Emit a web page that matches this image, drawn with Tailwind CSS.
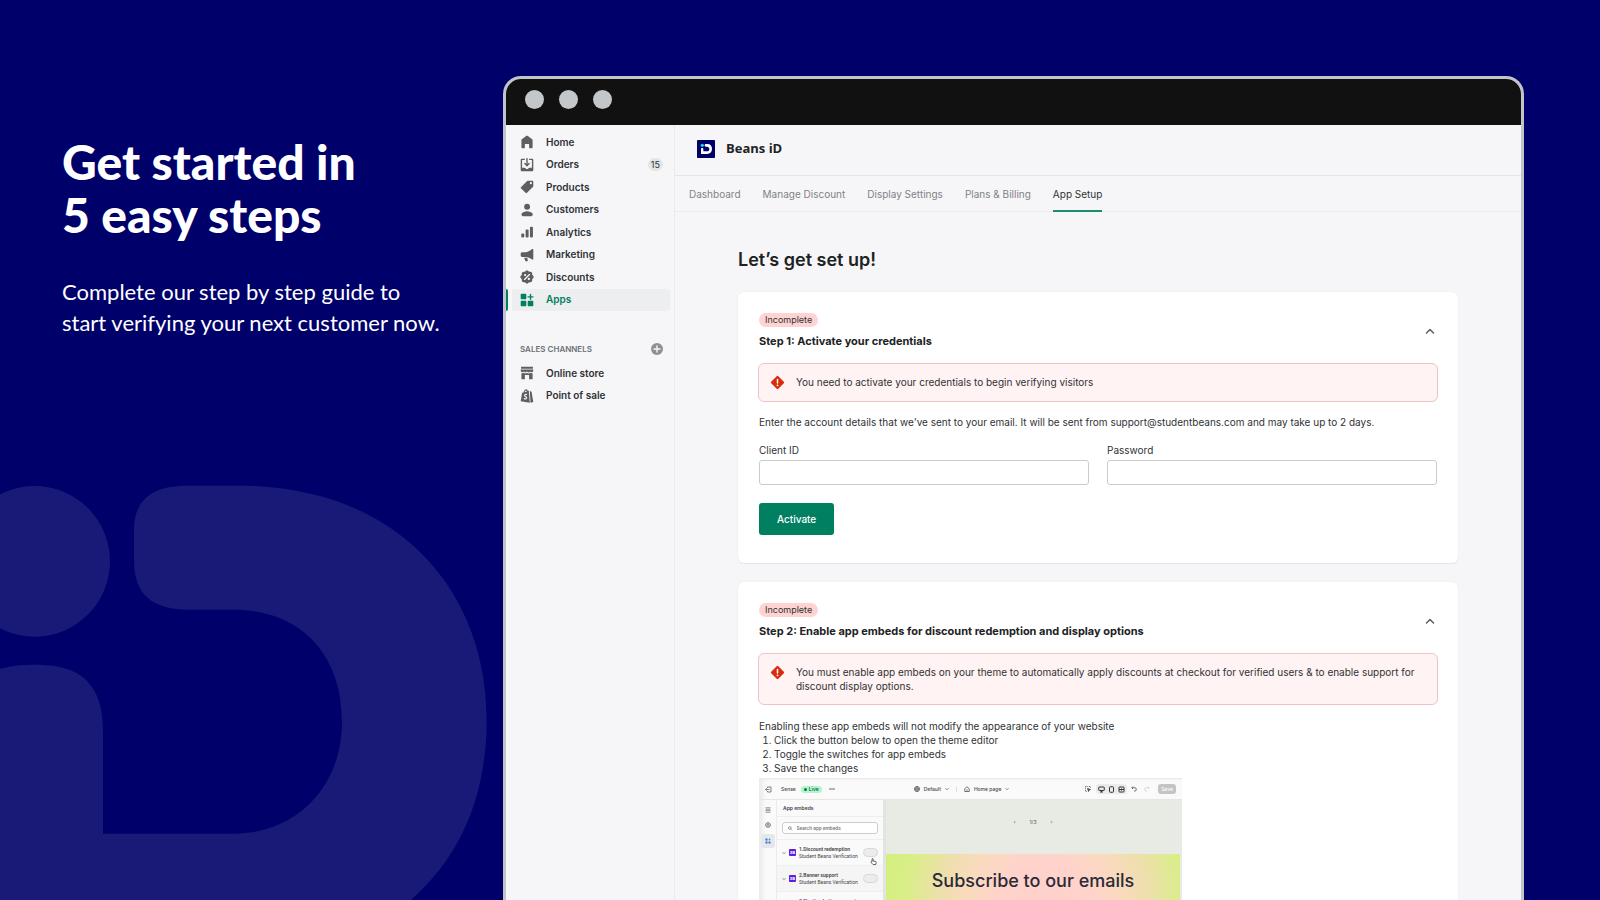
<!DOCTYPE html>
<html lang="en">
<head>
<meta charset="utf-8">
<meta name="viewport" content="width=device-width, initial-scale=1">
<title>Beans iD – App Setup</title>
<script src="https://cdn.jsdelivr.net/npm/@tailwindcss/browser@4"></script>
</head>
<body class="relative flex h-screen overflow-hidden bg-[#00006b] font-['Inter',sans-serif] text-[#303236]">

<!-- Brand mark behind the intro copy -->
<svg class="absolute bottom-0 left-0 w-[500px]" viewBox="0 0 1500 1320" fill="#191978" aria-hidden="true">
  <circle cx="104" cy="304" r="226"/>
  <path d="M560 77H720C1180 77 1460 380 1460 780C1460 1010 1380 1190 1233 1320H0V627C25 618 60 614 110 614C240 614 309 670 309 810V1121H700C890 1121 1026 980 1026 785C1026 580 900 449 700 449H570C450 449 402 400 402 300V210C402 125 450 77 560 77Z"/>
</svg>

<section class="relative w-[503px] shrink-0 pt-[135px] pl-[62px] font-['Lato',sans-serif] text-white">
  <h1 class="text-[48px] leading-[53px] font-black">Get started in<br>5 easy steps</h1>
  <p class="mt-[35px] text-[22px] leading-[31px]">Complete our step by step guide to<br>start verifying your next customer now.</p>
</section>

<div class="relative mt-[76px] mr-[76px] flex min-w-0 flex-1 flex-col overflow-hidden rounded-t-[18px] border-[3px] border-b-0 border-[#c1c5c9] bg-[#f6f6f8]">
  <div class="flex h-[46px] shrink-0 items-start gap-[15px] bg-[#111] pt-[11px] pl-[19px]">
    <span class="size-[19px] rounded-full bg-[#c3c7ca]"></span>
    <span class="size-[19px] rounded-full bg-[#c3c7ca]"></span>
    <span class="size-[19px] rounded-full bg-[#c3c7ca]"></span>
  </div>

  <div class="flex min-h-0 flex-1">
    <aside class="w-[169px] shrink-0 border-r border-[#ebebee] pt-[6px] text-[10px] font-semibold">
      <nav class="grid h-[180px] grid-rows-8" aria-label="Main">
        <a href="#" class="flex items-center pl-[14px]"><svg class="mr-3 size-[14px]" viewBox="0 0 20 20" fill="#5c5f62"><path d="M18 7.261V17.5c0 .841-.672 1.5-1.5 1.5h-2c-.828 0-1.5-.659-1.5-1.5V13H7v4.5c0 .841-.672 1.5-1.5 1.5h-2C2.672 19 2 18.341 2 17.5V7.261a1.5 1.5 0 0 1 .615-1.21l6.59-4.82a1.481 1.481 0 0 1 1.59 0l6.59 4.82A1.5 1.5 0 0 1 18 7.26z"/></svg>Home</a>
        <a href="#" class="flex items-center pr-[11px] pl-[14px]"><svg class="mr-3 size-[14px]" viewBox="0 0 20 20" fill="#5c5f62"><path d="M11 1a1 1 0 1 0-2 0v7.586L7.707 7.293a1 1 0 0 0-1.414 1.414l3 3a1 1 0 0 0 1.414 0l3-3a1 1 0 0 0-1.414-1.414L11 8.586V1z"/><path d="M3 14V3h4V1H2.5A1.5 1.5 0 0 0 1 2.5v15A1.5 1.5 0 0 0 2.5 19h15a1.5 1.5 0 0 0 1.5-1.5v-15A1.5 1.5 0 0 0 17.5 1H13v2h4v11h-3.5c-.775 0-1.388.662-1.926 1.244l-.11.12A1.994 1.994 0 0 1 10 16a1.994 1.994 0 0 1-1.463-.637l-.111-.12C7.888 14.664 7.275 14 6.5 14H3z"/></svg>Orders<span class="ml-auto rounded-full bg-[#e4e5e7] px-[3px] text-[9px] leading-[13px] font-normal">15</span></a>
        <a href="#" class="flex items-center pl-[14px]"><svg class="mr-3 size-[14px]" viewBox="0 0 20 20" fill="#5c5f62"><path fill-rule="evenodd" d="M10.293 1.293A1 1 0 0 1 11 1h7a1 1 0 0 1 1 1v7a1 1 0 0 1-.293.707l-9 9a1 1 0 0 1-1.414 0l-7-7a1 1 0 0 1 0-1.414l9-9zM15.5 6a1.5 1.5 0 1 0 0-3 1.5 1.5 0 0 0 0 3z"/></svg>Products</a>
        <a href="#" class="flex items-center pl-[14px]"><svg class="mr-3 size-[14px]" viewBox="0 0 20 20" fill="#5c5f62"><path d="M14.363 5.22a4.22 4.22 0 1 1-8.439 0 4.22 4.22 0 0 1 8.439 0zM2.67 14.469c1.385-1.09 4.141-2.853 7.474-2.853 3.332 0 6.089 1.764 7.474 2.853.618.486.81 1.308.567 2.056l-.333 1.02A2.11 2.11 0 0 1 15.846 19H4.441a2.11 2.11 0 0 1-2.005-1.455l-.333-1.02c-.245-.748-.052-1.57.567-2.056z"/></svg>Customers</a>
        <a href="#" class="flex items-center pl-[14px]"><svg class="mr-3 size-[14px]" viewBox="0 0 20 20" fill="#5c5f62"><rect x="14.2" y="2.500" width="4.300" height="15.500" rx="1.500"/><rect x="8" y="6.500" width="4.300" height="11.500" rx="1.500"/><rect x="1.800" y="12" width="4.300" height="6" rx="1.500"/></svg>Analytics</a>
        <a href="#" class="flex items-center pl-[14px]"><svg class="mr-3 size-[14px]" viewBox="0 0 20 20" fill="#5c5f62"><path d="M17.400 1.500A1 1 0 0 1 19 2.300v13.400a1 1 0 0 1-1.600.8c-2.400-1.800-4.700-3.200-7.900-3.700H3a2 2 0 0 1-2-2V8a2 2 0 0 1 2-2h5.500c3.500-.4 6.400-2.300 8.900-4.500zM6 14h4.500l.6 4a.9.900 0 0 1-.9 1H9.200a2 2 0 0 1-1.900-1.300z"/></svg>Marketing</a>
        <a href="#" class="flex items-center pl-[14px]"><svg class="mr-3 size-[14px]" viewBox="0 0 20 20"><g fill="#5c5f62"><rect x="2.600" y="2.600" width="14.800" height="14.800" rx="2.500"/><rect x="2.600" y="2.600" width="14.800" height="14.800" rx="2.500" transform="rotate(45 10 10)"/></g><path d="M6.500 13.500l7-7" stroke="#f6f6f8" stroke-width="1.800" stroke-linecap="round"/><circle cx="7.300" cy="7.300" r="1.600" fill="#f6f6f8"/><circle cx="12.700" cy="12.700" r="1.600" fill="#f6f6f8"/></svg>Discounts</a>
        <a href="#" aria-current="page" class="flex text-[#008060]"><span class="w-[2px] rounded-r-sm bg-[#008060]"></span><span class="mr-1 ml-1 flex flex-1 items-center rounded-[3px] bg-[#edeeef] pl-2"><svg class="mr-3 size-[14px]" viewBox="0 0 20 20" fill="#008060"><path d="M2.500 1H8a1 1 0 0 1 1 1v6a1 1 0 0 1-1 1H2a1 1 0 0 1-1-1V2a1 1 0 0 1 1-1zM2 11h6a1 1 0 0 1 1 1v6a1 1 0 0 1-1 1H2a1 1 0 0 1-1-1v-6a1 1 0 0 1 1-1zM12 11h6a1 1 0 0 1 1 1v6a1 1 0 0 1-1 1h-6a1 1 0 0 1-1-1v-6a1 1 0 0 1 1-1z"/><path d="M15 2v7M11.500 5.500h7" stroke="#008060" stroke-width="2" stroke-linecap="round"/></svg>Apps</span></a>
      </nav>
      <div class="mt-7 flex h-5 items-center justify-between pr-[11px] pl-[14px]">
        <h2 class="text-[8px] font-semibold text-[#6d7175]">SALES CHANNELS</h2>
        <button type="button" aria-label="Add sales channel"><svg class="block size-3" viewBox="0 0 12 12"><circle cx="6" cy="6" r="6" fill="#8c9196"/><path d="M6 3v6M3 6h6" stroke="#f6f6f8" stroke-width="1.400" stroke-linecap="round"/></svg></button>
      </div>
      <nav class="mt-[3px] grid h-[45px] grid-rows-2" aria-label="Sales channels">
        <a href="#" class="flex items-center pl-[14px]"><svg class="mr-3 size-[14px]" viewBox="0 0 20 20" fill="#5c5f62"><path d="M1.500 1h17v3h-17zM1 5h18v1.500a2.500 2.500 0 0 1-4.500 1.500 2.800 2.800 0 0 1-4.500 0 2.800 2.800 0 0 1-4.500 0A2.500 2.500 0 0 1 1 6.500zM2 10.300c1.200.4 2.500.2 3.500-.5 1.300 1 3.200 1 4.500 0 1.300 1 3.200 1 4.500 0 1 .7 2.300.9 3.500.5V19h-5v-6H7v6H2z"/></svg>Online store</a>
        <a href="#" class="flex items-center pl-[14px]"><svg class="mr-3 size-[14px]" viewBox="0 0 20 20"><path fill="#5c5f62" d="M3 5.500l2-.5C5.500 2.500 7 .5 9 .5c1 0 1.700.8 2 2l1.500-.5L14 19.500 1 17.500zM6.500 4.600l3.300-.9C9.600 2.700 9.200 2 8.700 2c-1 0-1.900 1.300-2.200 2.600zM14 3l2.500 1L19 18.500l-4 1z" fill-rule="evenodd"/><path d="M10 8c-1.500-.8-3.500-.3-3.500 1.200s3 1.600 3 3.400c0 1.600-2 2-4 .9" fill="none" stroke="#f6f6f8" stroke-width="1.600"/></svg>Point of sale</a>
      </nav>
    </aside>

    <main class="min-w-0 flex-1 overflow-hidden">
      <header class="flex h-[51px] items-center border-b border-[#e4e5e7] pb-[2px] pl-[22px]">
        <svg class="mr-[11px] size-[18px]" viewBox="0 0 54 54"><rect width="54" height="54" rx="2" fill="#00006b"/><circle cx="16" cy="16" r="5" fill="#1fd0e6"/><path fill="#fff" d="M27 12h4c9 0 14 6 14 14.500S40 42 30 42H12V28c0-3 1-4 3.500-4S19 25 19 28v6h11c4.500 0 7-3 7-7s-2.500-7-7-7h-3c-2.500 0-4-1-4-4s1.500-4 4-4z"/></svg>
        <span class="font-['Open_Sans',sans-serif] text-[13px] font-bold text-[#202223]">Beans iD</span>
      </header>
      <nav class="flex h-9 gap-[22px] border-b border-[#e9eaec] px-[14px] text-[10px] text-[#808387]" aria-label="App">
        <a href="#" class="flex items-center pt-px">Dashboard</a>
        <a href="#" class="flex items-center pt-px">Manage Discount</a>
        <a href="#" class="flex items-center pt-px">Display Settings</a>
        <a href="#" class="flex items-center pt-px">Plans &amp; Billing</a>
        <a href="#" aria-current="page" class="-mb-px flex items-center border-b-2 border-[#1a8c6f] pt-[2px] text-[#303236]">App Setup</a>
      </nav>

      <div class="px-[63px] pt-9 text-[10px] leading-[14px]">
        <h1 class="text-[18px] leading-6 font-semibold text-[#202223]">Let’s get set up!</h1>

        <section class="mt-5 rounded-[6px] bg-white px-[21px] pt-[21px] pb-7 shadow-[0_0_2px_rgba(0,0,0,0.06),0_1px_1px_rgba(0,0,0,0.06)]">
          <div class="flex items-center justify-between pr-px">
            <div>
              <span class="block w-fit rounded-full bg-[#fed3d1] px-[6px] text-[9px]">Incomplete</span>
              <h2 class="text-[11px] leading-7 font-bold text-[#202223]">Step 1: Activate your credentials</h2>
            </div>
            <button type="button" aria-label="Collapse step 1" class="mb-[6px]"><svg class="block h-2 w-3" viewBox="0 0 12 8" fill="none" stroke="#5c5f62" stroke-width="1.500" stroke-linecap="round" stroke-linejoin="round"><path d="M2.500 6L6 2.500 9.500 6"/></svg></button>
          </div>
          <div role="alert" class="-mx-px mt-2 flex items-start rounded-[6px] border border-[#efc4c4] bg-[#fff3f3] py-[11px] pl-[11px]">
            <svg class="mr-[11px] size-[15px] shrink-0" viewBox="0 0 20 20"><rect x="3.300" y="3.300" width="13.400" height="13.400" rx="1.500" transform="rotate(45 10 10)" fill="#d72c0d"/><path d="M10 6v4.500" stroke="#fff" stroke-width="2" stroke-linecap="round"/><circle cx="10" cy="13.800" r="1.200" fill="#fff"/></svg>
            <p>You need to activate your credentials to begin verifying visitors</p>
          </div>
          <p class="mt-[13px]">Enter the account details that we've sent to your email. It will be sent from support@studentbeans.com and may take up to 2 days.</p>
          <form>
            <div class="mt-[14px] grid grid-cols-2 gap-[18px]">
              <div><label for="client" class="block">Client ID</label><input id="client" type="text" class="mt-[3px] block h-[25px] w-full rounded-[3px] border border-[#c9cccf] bg-white px-2"></div>
              <div><label for="password" class="block">Password</label><input id="password" type="password" class="mt-[3px] block h-[25px] w-full rounded-[3px] border border-[#c9cccf] bg-white px-2"></div>
            </div>
            <button type="button" class="mt-[18px] block h-8 rounded-[3px] bg-[#008060] px-[18px] font-medium text-white">Activate</button>
          </form>
        </section>

        <section class="mt-[19px] rounded-[6px] bg-white px-[21px] pt-[21px] pb-7 shadow-[0_0_2px_rgba(0,0,0,0.06),0_1px_1px_rgba(0,0,0,0.06)]">
          <div class="flex items-center justify-between pr-px">
            <div>
              <span class="block w-fit rounded-full bg-[#fed3d1] px-[6px] text-[9px]">Incomplete</span>
              <h2 class="text-[11px] leading-7 font-bold text-[#202223]">Step 2: Enable app embeds for discount redemption and display options</h2>
            </div>
            <button type="button" aria-label="Collapse step 2" class="mb-[6px]"><svg class="block h-2 w-3" viewBox="0 0 12 8" fill="none" stroke="#5c5f62" stroke-width="1.500" stroke-linecap="round" stroke-linejoin="round"><path d="M2.500 6L6 2.500 9.500 6"/></svg></button>
          </div>
          <div role="alert" class="-mx-px mt-2 flex items-start rounded-[6px] border border-[#efc4c4] bg-[#fff3f3] py-[11px] pr-2 pl-[11px]">
            <svg class="mr-[11px] size-[15px] shrink-0" viewBox="0 0 20 20"><rect x="3.300" y="3.300" width="13.400" height="13.400" rx="1.500" transform="rotate(45 10 10)" fill="#d72c0d"/><path d="M10 6v4.500" stroke="#fff" stroke-width="2" stroke-linecap="round"/><circle cx="10" cy="13.800" r="1.200" fill="#fff"/></svg>
            <p>You must enable app embeds on your theme to automatically apply discounts at checkout for verified users &amp; to enable support for discount display options.</p>
          </div>
          <p class="mt-[14px]">Enabling these app embeds will not modify the appearance of your website</p>
          <ol class="list-decimal pl-[15px]">
            <li>Click the button below to open the theme editor</li>
            <li>Toggle the switches for app embeds</li>
            <li>Save the changes</li>
          </ol>

          <!-- Theme editor preview -->
          <div class="mt-[3px] flex h-[220px] w-[423px] flex-col overflow-hidden border-t border-[#ececec] bg-[#fafafa] text-[5px] leading-[7px] font-medium text-[#44464a] shadow-[inset_4px_0_4px_rgba(0,0,0,0.06)]">
            <div class="flex h-[21px] shrink-0 items-center border-b border-[#e6e6e6] pr-1 pl-[6px]">
              <svg class="size-[7px]" viewBox="0 0 14 14" fill="none" stroke="#55585c" stroke-width="1.500"><path d="M5 4V2h7v10H5v-2M9 7H1M3.500 4.500L1 7l2.500 2.500"/></svg>
              <span class="ml-[9px]">Sense</span>
              <span class="ml-[5px] flex items-center gap-[2px] rounded-full bg-[#aff5cf] px-[3px] text-[#0c5132]"><i class="size-[3px] rounded-full bg-[#0c7a43]"></i>Live</span>
              <svg class="ml-[7px] h-[2px] w-[6px]" viewBox="0 0 6 2" fill="#55585c"><circle cx="1" cy="1" r=".8"/><circle cx="3" cy="1" r=".8"/><circle cx="5" cy="1" r=".8"/></svg>
              <span class="ml-[79px] flex items-center gap-1"><svg class="size-[6px]" viewBox="0 0 12 12" fill="none" stroke="#44464a" stroke-width="1.500"><circle cx="6" cy="6" r="5"/><path d="M1 6h10M6 1c-3 3-3 7 0 10M6 1c3 3 3 7 0 10"/></svg>Default <svg class="size-1" viewBox="0 0 8 8" fill="none" stroke="#55585c" stroke-width="1.500"><path d="M1 2.500l3 3 3-3"/></svg></span>
              <span class="ml-[7px] h-[5px] border-l border-[#ddd]"></span>
              <span class="ml-[7px] flex items-center gap-1"><svg class="size-[6px]" viewBox="0 0 12 12" fill="none" stroke="#44464a" stroke-width="1.500"><path d="M1.500 5.500L6 1.500l4.500 4V11h-9zM4.500 8h3"/></svg>Home page <svg class="size-1" viewBox="0 0 8 8" fill="none" stroke="#55585c" stroke-width="1.500"><path d="M1 2.500l3 3 3-3"/></svg></span>
              <span class="ml-auto flex items-center">
                <svg class="mr-[5px] size-[6px]" viewBox="0 0 12 12" fill="none" stroke="#44464a" stroke-width="1.500"><path d="M1 1h10v4M1 1v10h4" stroke-dasharray="2 1.500"/><path fill="#44464a" d="M5 5l6 2-3 1-1 3z"/></svg>
                <span class="flex h-[10px] items-center gap-[3px] rounded-[3px] bg-[#ebebeb] px-[2px]">
                  <svg class="size-[7px]" viewBox="0 0 14 14" fill="none" stroke="#333" stroke-width="2"><rect x="1.500" y="2" width="11" height="7" rx="1"/><path d="M4 12h6M7 9v3"/></svg>
                  <svg class="size-[7px]" viewBox="0 0 14 14" fill="none" stroke="#333" stroke-width="2"><rect x="3" y="1.500" width="8" height="11" rx="1.500"/></svg>
                  <svg class="size-[7px]" viewBox="0 0 14 14" fill="none" stroke="#333" stroke-width="2"><rect x="2" y="2" width="10" height="10" rx="1"/><path d="M2 7h10M7 5v4"/></svg>
                </span>
                <svg class="ml-1 size-[6px]" viewBox="0 0 12 12" fill="none" stroke="#44464a" stroke-width="1.500"><path d="M4 1L1.500 3.500 4 6M2 3.500h5.500a3 3 0 0 1 0 6.500H6"/></svg>
                <svg class="ml-[7px] size-[6px]" viewBox="0 0 12 12" fill="none" stroke="#ccc" stroke-width="1.500"><path d="M8 1l2.500 2.500L8 6M10 3.500H4.500a3 3 0 0 0 0 6.500H6"/></svg>
                <button type="button" class="mr-[2px] ml-2 h-[10px] w-[18px] rounded-[3px] bg-[#c4c4c4] leading-[10px] text-white">Save</button>
              </span>
            </div>
            <div class="flex min-h-0 flex-1">
              <div class="flex w-[18px] flex-col items-center gap-[3px] border-r border-[#ebebeb] pt-1">
                <svg class="my-[3px] size-[6px]" viewBox="0 0 12 12" fill="none" stroke="#777" stroke-width="1.500"><path d="M1 1.500h10M1 10.500h10M2 4.500h8v3H2z"/></svg>
                <svg class="my-[3px] size-[6px]" viewBox="0 0 12 12" fill="none" stroke="#666" stroke-width="2"><circle cx="6" cy="6" r="4.500"/><circle cx="6" cy="6" r="1"/></svg>
                <span class="flex h-[14px] w-[14px] items-center justify-center rounded-[3px] bg-[#e6e7ea]"><svg class="size-[6px]" viewBox="0 0 12 12" fill="#2f74d0"><path d="M1 1h4v4H1zM1 7h4v4H1zM7 7h4v4H7zM8.300 1h1.400v4H8.300zM7 2.300h4v1.400H7z"/></svg></span>
              </div>
              <div class="flex w-[106px] flex-col font-['Roboto',sans-serif]">
                <h3 class="h-[17px] border-b border-[#eee] pl-[6px] font-['Inter',sans-serif] font-semibold leading-[17px]">App embeds</h3>
                <div class="border-b border-[#eee] px-[5px] py-[5px]">
                  <label class="flex h-3 items-center gap-1 rounded-[3px] border border-[#ccc] bg-white px-[5px]"><svg class="size-[5px]" viewBox="0 0 10 10" fill="none" stroke="#666" stroke-width="1.500"><circle cx="4" cy="4" r="3"/><path d="M6.500 6.500L9 9"/></svg><input type="search" aria-label="Search app embeds" placeholder="Search app embeds" class="w-full min-w-0 leading-[7px] placeholder:text-[#777]"></label>
                </div>
                <div class="relative flex h-[26px] items-center border-b border-[#eee] pl-[5px]"><svg class="size-1" viewBox="0 0 8 8" fill="none" stroke="#666" stroke-width="1.500"><path d="M1 2.500l3 3 3-3"/></svg><span class="mx-[3px] w-[7px] rounded-[1px] bg-[#5a1fe0] text-center text-[4px] font-bold text-white">SB</span><span class="font-normal"><b class="block font-semibold">1.Discount redemption</b>Student Beans Verification</span><button type="button" role="switch" aria-checked="false" aria-label="Discount redemption" class="mr-[5px] ml-auto h-[9px] w-[15px] rounded-full border border-[#d8d8d8] bg-[#ececec]"></button>
                  <svg class="absolute right-[6px] bottom-0 size-[7px]" viewBox="0 0 14 14" fill="#fff" stroke="#333" stroke-width="1.500" stroke-linejoin="round"><path d="M4 8V2.500a1.200 1.200 0 0 1 2.400 0V6l5 1c.8.200 1.100.8 1 1.500L11.500 13H6L2 8.800C1.500 8 2.500 7 3.300 7.500z"/></svg>
                </div>
                <div class="flex h-[26px] items-center border-b border-[#eee] bg-[#f5f5f5] pl-[5px]"><svg class="size-1" viewBox="0 0 8 8" fill="none" stroke="#666" stroke-width="1.500"><path d="M1 2.500l3 3 3-3"/></svg><span class="mx-[3px] w-[7px] rounded-[1px] bg-[#5a1fe0] text-center text-[4px] font-bold text-white">SB</span><span class="font-normal"><b class="block font-semibold">2.Banner support</b>Student Beans Verification</span><button type="button" role="switch" aria-checked="false" aria-label="Banner support" class="mr-[5px] ml-auto h-[9px] w-[15px] rounded-full border border-[#d8d8d8] bg-[#ececec]"></button></div>
                <div class="flex h-[26px] items-center pl-[5px]"><svg class="size-1" viewBox="0 0 8 8" fill="none" stroke="#666" stroke-width="1.500"><path d="M1 2.500l3 3 3-3"/></svg><span class="mx-[3px] w-[7px] rounded-[1px] bg-[#5a1fe0] text-center text-[4px] font-bold text-white">SB</span><span class="font-normal"><b class="block font-semibold">3.Floating button support</b>Student Beans Verification</span><button type="button" role="switch" aria-checked="false" aria-label="Floating button support" class="mr-[5px] ml-auto h-[9px] w-[15px] rounded-full border border-[#d8d8d8] bg-[#ececec]"></button></div>
              </div>
              <div class="flex flex-1 flex-col border-l-[3px] border-[#e2e4e1] bg-[#e8ebe4] pr-[2px]">
                <div class="flex h-[54px] items-start justify-center gap-[14px] pt-[19px] text-[#666]"><span>‹</span><span>1/3</span><span>›</span></div>
                <div class="flex-1 bg-[radial-gradient(circle_at_54%_50px,#ffd0cc_0px,#ffd3cb_45px,#fadabf_75px,#eedfac_105px,#d9ee88_140px,#d2f07c_170px)] pt-[14px] text-center text-[18px] leading-[26px] text-[#2b2a38]">Subscribe to our emails</div>
              </div>
            </div>
          </div>
        </section>
      </div>
    </main>
  </div>
</div>
</body>
</html>
